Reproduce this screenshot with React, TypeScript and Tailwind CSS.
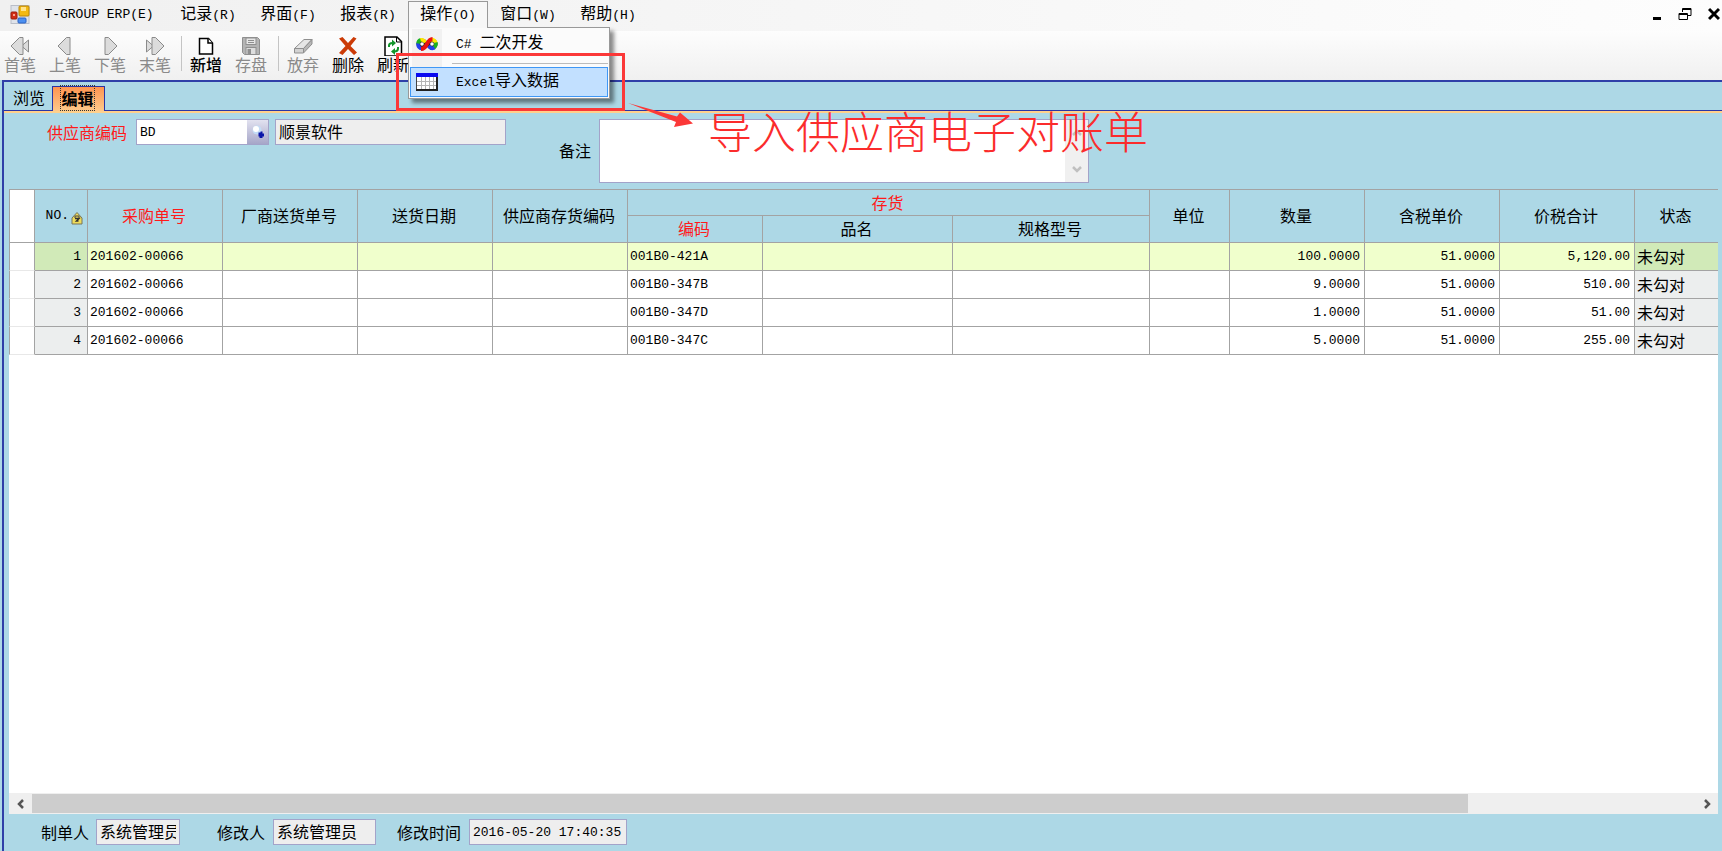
import type { ReactNode } from 'react'
import clsx from 'clsx'

const MONO = "font-['Liberation_Mono',monospace] text-[13px]"
const FIELD = 'h-[26px] border border-[#a3a3c9] px-[3px] text-base leading-[18px] text-black outline-none'

interface Row {
  no: number
  order: string
  code: string
  qty: string
  price: string
  total: string
  status: string
}

const rows: Row[] = [
  { no: 1, order: '201602-00066', code: '001B0-421A', qty: '100.0000', price: '51.0000', total: '5,120.00', status: '未勾对' },
  { no: 2, order: '201602-00066', code: '001B0-347B', qty: '9.0000', price: '51.0000', total: '510.00', status: '未勾对' },
  { no: 3, order: '201602-00066', code: '001B0-347D', qty: '1.0000', price: '51.0000', total: '51.00', status: '未勾对' },
  { no: 4, order: '201602-00066', code: '001B0-347C', qty: '5.0000', price: '51.0000', total: '255.00', status: '未勾对' },
]

function AppIcon() {
  return (
    <svg width="20" height="20" viewBox="0 0 20 20">
      <rect x="1" y="0.5" width="18" height="18" fill="#dfe3ea" stroke="#b9bec8" />
      <rect x="9" y="1" width="10" height="10" rx="1" fill="#f3b911" stroke="#b98408" />
      <rect x="11" y="2" width="5" height="4" fill="#ffe38a" />
      <rect x="1" y="7" width="6" height="7" rx="1" fill="#d12c16" stroke="#9b1c0c" />
      <rect x="3" y="9" width="2" height="2" fill="#f7a08f" />
      <rect x="8" y="13" width="8" height="5" rx="1" fill="#4b8ff0" stroke="#2c62c4" />
    </svg>
  )
}

function FirstIcon() {
  return (
    <svg width="20" height="20" viewBox="0 0 20 20" fill="#dcdcdc" stroke="#8a8a8a">
      <path d="M18.500 4v12l-7-6z" />
      <path d="M9.500 1.500h3.500v17H9.500L1 10z" />
    </svg>
  )
}

function PrevIcon() {
  return (
    <svg width="20" height="20" viewBox="0 0 20 20" fill="#dcdcdc" stroke="#8a8a8a">
      <path d="M11.500 1.500H15v17h-3.500L3 10z" />
    </svg>
  )
}

function NextIcon() {
  return (
    <svg width="20" height="20" viewBox="0 0 20 20" fill="#dcdcdc" stroke="#8a8a8a">
      <path d="M5 1.500h3.500L17 10l-8.500 8.500H5z" />
    </svg>
  )
}

function LastIcon() {
  return (
    <svg width="20" height="20" viewBox="0 0 20 20" fill="#dcdcdc" stroke="#8a8a8a">
      <path d="M1.500 4v12l7-6z" />
      <path d="M7 1.500h3.500L19 10l-8.500 8.500H7z" />
    </svg>
  )
}

function NewIcon() {
  return (
    <svg width="20" height="20" viewBox="0 0 20 20" fill="#fff" stroke="#000" strokeWidth="1.500">
      <path d="M3.500 2.500h9l4 4.500v11h-13z" />
      <path d="M12 2.500V7h4.500" />
    </svg>
  )
}

function SaveIcon() {
  return (
    <svg width="20" height="20" viewBox="0 0 20 20" stroke="#8f8f8f">
      <path d="M1.500 1.500h15l2 2v15h-15l-2-2z" fill="#b4b4b4" />
      <rect x="5" y="2" width="10" height="6.500" fill="#e6e6e6" />
      <path d="M7 4.500h6M7 6.500h6" />
      <rect x="5" y="11.500" width="10" height="7" fill="#dedede" />
      <rect x="7" y="13.500" width="2.500" height="4" fill="#8f8f8f" />
    </svg>
  )
}

function EraserIcon() {
  return (
    <svg width="20" height="20" viewBox="0 0 20 20" stroke="#8f8f8f" strokeLinejoin="round">
      <path d="M1.500 12.500 11 3.500h8l-8.500 9z" fill="#e6e6e6" />
      <path d="M1.500 12.500h9v4.500h-9z" fill="#d2d2d2" />
      <path d="M10.500 12.500 19 3.500V8l-8.500 9z" fill="#b8b8b8" />
    </svg>
  )
}

function DeleteIcon() {
  return (
    <svg width="20" height="20" viewBox="0 0 20 20" fill="#cb3a06">
      <path d="M1 2.500 4.500 1 10 7l5.500-6 3 1.500L12.500 10l6.500 6.500-3 2.500-6-6-5.500 6L1 17l6.500-7z" />
    </svg>
  )
}

function RefreshIcon() {
  return (
    <svg width="20" height="20" viewBox="0 0 20 20" fill="none">
      <path d="M2 1h12l4.500 4.500V20H2z" fill="#fff" stroke="#000" strokeWidth="1.500" />
      <path d="M13.500 1v5h5" stroke="#000" />
      <path d="M6 11V9.500Q6 7 9.500 7" stroke="#12962b" strokeWidth="2" />
      <path d="M9 3.500 13 7l-4 3.500z" fill="#12962b" />
      <path d="M15 11v1.500q0 3-3.500 3" stroke="#12962b" strokeWidth="2" />
      <path d="M12 12v7l-4-3.500z" fill="#12962b" />
    </svg>
  )
}

function CSharpIcon() {
  return (
    <svg width="22" height="14" viewBox="0 0 22 14" fill="none">
      <circle cx="6" cy="7" r="5.500" fill="#222" />
      <circle cx="16" cy="7" r="5.500" fill="#222" />
      <g strokeWidth="3.500">
        <path d="M2 7a4 4.500 0 0 1 3-4.300" stroke="#19b321" />
        <path d="M4.500 2.800Q7.500 2 9.500 5.500" stroke="#ffe600" />
        <path d="M2 6.500A4 4.500 0 0 0 6.500 11.500" stroke="#2340ee" />
        <path d="M14 3q4.500-1.500 6 3" stroke="#ffe600" />
        <path d="M20 5.500q.5 3.500-2.500 5.500" stroke="#19b321" />
        <path d="M18.500 10.800Q15.500 12.500 12.500 9" stroke="#2340ee" />
      </g>
      <circle cx="6" cy="7" r="1.800" fill="#fff" />
      <circle cx="16" cy="7" r="1.800" fill="#fff" />
      <path d="M5 12Q8.500 12 11 7t5.500-5" stroke="#ea1212" strokeWidth="4" />
    </svg>
  )
}

function SheetIcon() {
  return (
    <svg width="22" height="18" viewBox="0 0 22 18">
      <rect x="0.500" y="0.500" width="21" height="17" fill="#fff" stroke="#444" />
      <rect width="22" height="4" fill="#0a0af0" />
      <path d="M1 8.500h20M1 12.500h20M5.500 4v13M9.500 4v13M13.500 4v13M17.500 4v13" stroke="#b5b5b5" />
      <path d="M0 17h22M21 4v14" stroke="#222" strokeWidth="2" />
    </svg>
  )
}

function SearchIcon() {
  return (
    <svg width="14" height="14" viewBox="0 0 14 14">
      <circle cx="6" cy="5" r="4.500" fill="#c4dcf6" />
      <circle cx="5" cy="4" r="3" fill="#fff" />
      <path d="M7.500 7.500h2v-1h2v2H13v3h-1.500V13h-3v-1.500h-1z" fill="#0a14a8" />
    </svg>
  )
}

function LockIcon() {
  return (
    <svg width="12" height="14" viewBox="0 0 12 14">
      <path d="M1 7 6 1.500 11 7v6H1z" fill="#efdc5a" stroke="#77755a" />
      <path d="M4 7V5h4v2" fill="none" stroke="#444" />
      <path d="M4 7.500h4L5.500 10h2" fill="none" stroke="#333" strokeWidth="1.500" />
    </svg>
  )
}

function Chevron({ d, color = '#555' }: { d: string; color?: string }) {
  return (
    <svg width="10" height="10" viewBox="0 0 10 10" fill="none" stroke={color} strokeWidth="2.500">
      <path d={d} />
    </svg>
  )
}

function MenuButton({ label, hotkey }: { label: string; hotkey: string }) {
  return (
    <button className="h-7 w-20 pb-0.5 text-center">
      {label}
      <span className={MONO}>({hotkey})</span>
    </button>
  )
}

function ToolButton({ label, icon, tone = 'text-[#8a8a8a]' }: { label: string; icon: ReactNode; tone?: string }) {
  return (
    <button className={clsx('flex w-8 flex-col items-center whitespace-nowrap', tone)}>
      {icon}
      <span className="leading-4">{label}</span>
    </button>
  )
}

function OperationMenu() {
  return (
    <div className="absolute top-[26px] left-0 z-10 w-[202px] border border-[#999] bg-[#fbfbfb] p-px shadow-[4px_4px_4px_rgba(0,0,0,0.45)]">
      <button className="flex h-[30px] w-full items-center text-left">
        <span className="ml-0.5 flex h-full w-[30px] items-center justify-center bg-[#f1f1f1]">
          <CSharpIcon />
        </span>
        <span className="ml-[14px] pb-0.5">
          <span className={MONO}>C# </span>二次开发
        </span>
      </button>
      <div className="flex h-2 items-center">
        <div className="ml-0.5 h-full w-[30px] bg-[#f1f1f1]" />
        <div className="ml-[10px] h-px flex-1 bg-[#bbb]" />
      </div>
      <button className="flex h-[30px] w-full items-center border border-[#3f97f5] bg-[#c2e0ff] text-left">
        <span className="ml-px flex w-[30px] justify-center">
          <SheetIcon />
        </span>
        <span className="ml-[14px] pb-0.5">
          <span className={MONO}>Excel</span>导入数据
        </span>
      </button>
    </div>
  )
}

function MenuBar() {
  return (
    <nav className="flex h-[31px] items-center bg-linear-to-r from-[#f0f0f0] to-[#fdfdfd] pr-0.5 pb-px pl-2.5">
      <AppIcon />
      <button className={clsx('h-7 w-[138px] text-center', MONO)}>T-GROUP ERP(E)</button>
      <MenuButton label="记录" hotkey="R" />
      <MenuButton label="界面" hotkey="F" />
      <MenuButton label="报表" hotkey="R" />
      <div className="relative h-7">
        <button className="relative z-20 h-[27px] w-20 border border-b-0 border-[#999] bg-[#f7f7f7] pb-0.5">
          操作<span className={MONO}>(O)</span>
        </button>
        <OperationMenu />
      </div>
      <MenuButton label="窗口" hotkey="W" />
      <MenuButton label="帮助" hotkey="H" />
      <div className="ml-auto flex gap-4 pb-0.5">
        <button aria-label="最小化">
          <svg width="10" height="14" viewBox="0 0 10 14">
            <path d="M1 11.500h8" stroke="#000" strokeWidth="3" />
          </svg>
        </button>
        <button aria-label="还原">
          <svg width="14" height="14" viewBox="0 0 14 14" fill="none" stroke="#000">
            <path d="M4.500 5V1.500h8.500v7h-3M4 2.500h9" />
            <path d="M1 6.500h8.500v6H1zM1 7.500h8" />
          </svg>
        </button>
        <button aria-label="关闭">
          <svg width="12" height="14" viewBox="0 0 12 14">
            <path d="m1 2 10 10M11 2 1 12" stroke="#000" strokeWidth="3" />
          </svg>
        </button>
      </div>
    </nav>
  )
}

function ToolBar() {
  return (
    <div className="flex h-[49px] bg-linear-to-b from-[#fdfdfd] to-[#f0f0f0] pt-[5px] pl-1">
      <div className="flex gap-[13px]">
        <ToolButton label="首笔" icon={<FirstIcon />} />
        <ToolButton label="上笔" icon={<PrevIcon />} />
        <ToolButton label="下笔" icon={<NextIcon />} />
        <ToolButton label="末笔" icon={<LastIcon />} />
      </div>
      <div className="mr-2 ml-[10px] h-[35px] w-px bg-[#c4c4c4]" />
      <div className="flex gap-[13px]">
        <ToolButton label="新增" icon={<NewIcon />} tone="font-medium text-black" />
        <ToolButton label="存盘" icon={<SaveIcon />} />
      </div>
      <div className="mr-2 ml-[11px] h-[35px] w-px bg-[#c4c4c4]" />
      <div className="flex gap-[13px]">
        <ToolButton label="放弃" icon={<EraserIcon />} />
        <ToolButton label="删除" icon={<DeleteIcon />} tone="text-black" />
        <ToolButton label="刷新" icon={<RefreshIcon />} tone="text-black" />
      </div>
    </div>
  )
}

function Tabs() {
  return (
    <div className="flex h-[31px] items-end border-b-2 border-b-[#ffd08c]">
      <button className="h-full w-12 border-b border-[#2a35a5] pt-0.5 pl-0.5">浏览</button>
      <button className="h-[25px] w-[53px] border border-b-0 border-[#2a35a5] bg-linear-to-b from-[#ff9450] to-[#ffc98a] pr-0.5 pb-0.5 font-bold">
        <span className="outline-1 outline-dotted outline-[#333]">编辑</span>
      </button>
      <div className="h-full flex-1 border-b border-[#2a35a5]" />
    </div>
  )
}

function SupplierForm() {
  return (
    <form className="flex h-[76px] items-start pt-[6px] pl-[43px]">
      <label htmlFor="supplier" className="mt-1 w-[89px] text-[#ff1a1a]">
        供应商编码
      </label>
      <div className="flex">
        <input id="supplier" defaultValue="BD" className={clsx(FIELD, MONO, 'w-[111px] border-r-0 bg-white')} />
        <button
          type="button"
          aria-label="查找"
          className="flex h-[26px] w-[22px] items-center justify-center border border-l-0 border-[#a3a3c9] bg-linear-to-b from-[#e2e2f0] to-[#a6a6c8]"
        >
          <SearchIcon />
        </button>
      </div>
      <input aria-label="供应商名称" readOnly defaultValue="顺景软件" className={clsx(FIELD, 'ml-[6px] w-[231px] bg-[#eeeeee] pb-0.5')} />
      <label htmlFor="remark" className="mt-[22px] ml-[53px] w-10">
        备注
      </label>
      <div className="flex h-16 w-[490px] border border-[#a3a3c9] bg-white">
        <textarea id="remark" className="flex-1 resize-none overflow-hidden outline-none" />
        <div className="flex w-[23px] flex-col items-center justify-between bg-[#f0f0f0] py-2">
          <Chevron d="M1 7l4-4 4 4" color="#c0c0c0" />
          <Chevron d="M1 3l4 4 4-4" color="#c0c0c0" />
        </div>
      </div>
    </form>
  )
}

const LINE = 'border-r border-b border-[#a3a3a3]'

function Head({ children, red, group, sub, last }: { children: ReactNode; red?: boolean; group?: boolean; sub?: boolean; last?: boolean }) {
  return (
    <th
      rowSpan={group || sub ? 1 : 2}
      colSpan={group ? 3 : 1}
      className={clsx(
        'bg-[#add8e6] pt-0 pr-0.5 pb-0.5 pl-0 font-normal whitespace-nowrap',
        last ? 'border-b border-[#a3a3a3]' : LINE,
        !sub && 'border-t',
        red && 'text-[#ff1a1a]',
      )}
    >
      {children}
    </th>
  )
}

function Grid() {
  return (
    <table className="w-full table-fixed border-separate border-spacing-0">
      <colgroup>
        <col className="w-[26px]" />
        <col className="w-[53px]" />
        <col className="w-[135px]" />
        <col className="w-[135px]" />
        <col className="w-[135px]" />
        <col className="w-[135px]" />
        <col className="w-[135px]" />
        <col className="w-[190px]" />
        <col className="w-[197px]" />
        <col className="w-20" />
        <col className="w-[135px]" />
        <col className="w-[135px]" />
        <col className="w-[135px]" />
        <col />
      </colgroup>
      <thead>
        <tr className="h-[27px]">
          <td rowSpan={2} className={clsx(LINE, 'border-t border-l bg-white')} />
          <Head>
            <span className="flex items-end justify-end gap-0.5 pt-0.5 pr-0.5">
              <span className={MONO}>NO.</span>
              <LockIcon />
            </span>
          </Head>
          <Head red>采购单号</Head>
          <Head>厂商送货单号</Head>
          <Head>送货日期</Head>
          <Head>供应商存货编码</Head>
          <Head red group>存货</Head>
          <Head>单位</Head>
          <Head>数量</Head>
          <Head>含税单价</Head>
          <Head>价税合计</Head>
          <Head last>状态</Head>
        </tr>
        <tr className="h-[27px]">
          <Head red sub>编码</Head>
          <Head sub>品名</Head>
          <Head sub>规格型号</Head>
        </tr>
      </thead>
      <tbody>
        {rows.map((row) => {
          const current = row.no === 1
          const cell = clsx(LINE, 'px-[2px] py-0', current ? 'bg-[#f0ffcc]' : 'bg-white')
          const num = clsx(cell, MONO, 'pr-1 text-right')
          const locked = current ? 'bg-[#d1eab8]' : 'bg-[#eceeee]'
          return (
            <tr key={row.no} className="h-7">
              <td className="border-r border-b border-l border-r-[#a3a3a3] border-b-[#e8e8e8] border-l-[#a3a3a3] bg-white" />
              <td className={clsx(LINE, MONO, locked, 'py-0 pr-1.5 text-right')}>{row.no}</td>
              <td className={clsx(cell, MONO)}>{row.order}</td>
              <td className={cell} />
              <td className={cell} />
              <td className={cell} />
              <td className={clsx(cell, MONO)}>{row.code}</td>
              <td className={cell} />
              <td className={cell} />
              <td className={cell} />
              <td className={num}>{row.qty}</td>
              <td className={num}>{row.price}</td>
              <td className={num}>{row.total}</td>
              <td className={clsx('border-b border-[#a3a3a3] px-[2px] pt-0 pb-0.5', locked)}>{row.status}</td>
            </tr>
          )
        })}
      </tbody>
    </table>
  )
}

function HScroll() {
  return (
    <div className="flex h-[21px] items-center bg-[#efefef]">
      <button aria-label="向左" className="flex w-[23px] justify-center">
        <Chevron d="M7 1L3 5l4 4" />
      </button>
      <div className="flex h-[19px] flex-1">
        <div className="flex-[19] bg-[#cdcdcd]" />
        <div className="flex-[3]" />
      </div>
      <button aria-label="向右" className="flex w-[23px] justify-center">
        <Chevron d="M3 1l4 4-4 4" />
      </button>
    </div>
  )
}

function StatusBar() {
  return (
    <footer className="flex h-[37px] items-center pb-px pl-[37px]">
      <label htmlFor="creator" className="w-[55px]">制单人</label>
      <input id="creator" readOnly defaultValue="系统管理员" className={clsx(FIELD, 'w-[84px] bg-[#eeeeee] pb-0.5')} />
      <label htmlFor="editor" className="ml-[37px] w-[56px]">修改人</label>
      <input id="editor" readOnly defaultValue="系统管理员" className={clsx(FIELD, 'w-[103px] bg-[#eeeeee] pb-0.5')} />
      <label htmlFor="edited" className="ml-[21px] w-[72px]">修改时间</label>
      <input id="edited" readOnly defaultValue="2016-05-20 17:40:35" className={clsx(FIELD, MONO, 'w-[158px] bg-[#eeeeee]')} />
    </footer>
  )
}

// red frame, arrow and note drawn over the window
function Callout() {
  return (
    <div className="pointer-events-none absolute top-[53px] left-[396px] z-30">
      <div className="h-[58px] w-[229px] border-3 border-[#fb3838]" />
      <svg className="absolute top-[48px] left-[230px]" width="70" height="28" viewBox="0 0 70 28" fill="#fb3838">
        <path d="M2 2 51 15.500 54 11.500 67 22.500 48 26 50 21z" />
      </svg>
      <p className="absolute top-[51px] left-[312px] text-[44px] leading-[52px] font-light whitespace-nowrap text-[#fb2c2c]">
        导入供应商电子对账单
      </p>
    </div>
  )
}

export default function App() {
  return (
    <div className="relative flex min-h-screen flex-col overflow-hidden bg-[#add8e6] font-['Noto_Sans_CJK_SC',sans-serif] text-base leading-[18px] text-black">
      <MenuBar />
      <ToolBar />
      <main className="ml-0.5 flex flex-1 flex-col border-t-2 border-l-2 border-[#2f3fa8]">
        <Tabs />
        <SupplierForm />
        <section className="mr-1 ml-[5px] flex flex-1 flex-col bg-white">
          <Grid />
          <div className="flex-1" />
          <HScroll />
        </section>
        <StatusBar />
      </main>
      <Callout />
    </div>
  )
}
